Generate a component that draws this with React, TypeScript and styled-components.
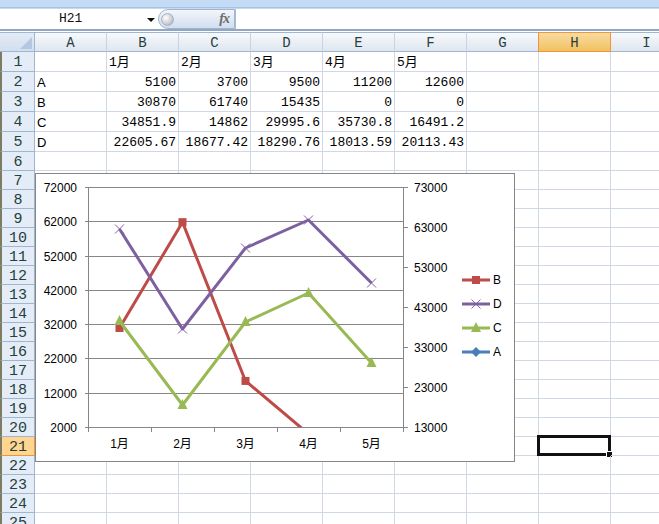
import React from "react";
import styled, { createGlobalStyle, css } from "styled-components";

const GlobalStyle = createGlobalStyle`
  html, body {
    margin: 0;
    padding: 0;
    background: #fff;
  }
  body {
    width: 659px;
    height: 524px;
    overflow: hidden;
    font-family: "Liberation Sans", Arial, sans-serif;
  }
`;

const Window = styled.div`
  width: 659px;
  height: 524px;
  overflow: hidden;
  background: #fff;
`;

const TitleStrip = styled.div`
  height: 7px;
  background: #c4dbf6;
  border-bottom: 1px solid #a9c2e3;
`;

const FormulaBar = styled.div`
  display: flex;
  height: 20px;
  border-top: 1px solid #c9d8ec;
  border-bottom: 2px solid #8da7c5;
  background: #fff;
  margin-bottom: 1px;
`;

const NameBox = styled.div`
  position: relative;
  width: 158px;
  flex-shrink: 0;
  font: 13px/20px "Liberation Mono", monospace;
  color: #111;
  padding-left: 59px;
  box-sizing: border-box;

  &::after {
    content: "";
    position: absolute;
    left: 147px;
    top: 9px;
    border-left: 4px solid transparent;
    border-right: 4px solid transparent;
    border-top: 4px solid #111;
  }
`;

const FxButton = styled.div`
  display: flex;
  align-items: center;
  justify-content: space-between;
  width: 77px;
  height: 20px;
  box-sizing: border-box;
  flex-shrink: 0;
  padding: 0 5px 0 2px;
  border: 1px solid #9fb5d0;
  border-radius: 10px 0 0 10px;
  background: linear-gradient(#f3f6fb, #d2deee);
`;

const Knob = styled.span`
  width: 13px;
  height: 13px;
  border-radius: 50%;
  background: radial-gradient(circle at 35% 35%, #ffffff, #c9ccd2 60%, #9ea4ad);
  border: 1px solid #a7b1bf;
  box-sizing: border-box;
`;

const FxLabel = styled.span`
  font: italic bold 14px "Liberation Serif", serif;
  color: #6b6b6b;
  letter-spacing: -1px;
`;

const FormulaInput = styled.div`
  flex: 1;
  border-left: 1px solid #a9bdd6;
`;

const Sheet = styled.div`
  position: relative;
`;

const Row = styled.div<{ $h: number }>`
  display: flex;
  height: ${(p) => p.$h}px;
`;

const HeaderRow = styled.div`
  display: flex;
  height: 20px;
`;

const Corner = styled.div`
  position: relative;
  width: 35px;
  flex-shrink: 0;
  box-sizing: border-box;
  border: 1px solid #9eb6ce;
  border-left: none;
  background: linear-gradient(#e3ebf6, #d3dfee);

  &::after {
    content: "";
    position: absolute;
    right: 2px;
    bottom: 2px;
    border-left: 12px solid transparent;
    border-bottom: 12px solid #b3c7e0;
  }
`;

const ColHeader = styled.div<{ $active?: boolean }>`
  width: 72px;
  flex-shrink: 0;
  box-sizing: border-box;
  text-align: center;
  font: 14px/18px "Liberation Mono", monospace;
  padding-top: 1px;
  color: #253f3c;
  border-top: 1px solid #9eb6ce;
  border-bottom: 1px solid #9eb6ce;
  border-right: 1px solid #c5d3e4;
  background: linear-gradient(#f7f9fc, #dfe6ef);
  ${(p) =>
    p.$active &&
    css`
      background: linear-gradient(#f9dba2, #f1c15f);
      border-color: #f29536;
      border-left: 1px solid #f29536;
      margin-left: -1px;
      width: 73px;
    `}
`;

const RowHeader = styled.div<{ $active?: boolean }>`
  width: 35px;
  flex-shrink: 0;
  box-sizing: border-box;
  text-align: center;
  font: 15px/18px "Liberation Mono", monospace;
  padding-top: 2px;
  color: #253f3c;
  background: #e4ecf7;
  border-left: 2px solid #7c7c62;
  border-right: 1px solid #9eb6ce;
  border-bottom: 1px solid #9eb6ce;
  ${(p) =>
    p.$active &&
    css`
      background: #ffd58f;
      border-right-color: #f29536;
      border-bottom-color: #f29536;
    `}
`;

const Cell = styled.div<{ $align: "left" | "right"; $sans?: boolean; $selected?: boolean }>`
  position: relative;
  width: 72px;
  flex-shrink: 0;
  box-sizing: border-box;
  padding: 2px 2px 0 2px;
  white-space: nowrap;
  overflow: hidden;
  text-align: ${(p) => p.$align};
  font-size: 13px;
  line-height: 18px;
  font-family: ${(p) =>
    p.$sans
      ? `"Liberation Sans", Arial, sans-serif`
      : `"Liberation Mono", "Noto Sans CJK SC", monospace`};
  color: #000;
  border-right: 1px solid #d0d7e5;
  border-bottom: 1px solid #d0d7e5;
  ${(p) =>
    p.$selected &&
    css`
      overflow: visible;
      &::before {
        content: "";
        position: absolute;
        top: -2px;
        left: -2px;
        right: -1px;
        bottom: -1px;
        border: 3px solid #111;
      }
      &::after {
        content: "";
        position: absolute;
        right: -3px;
        bottom: -3px;
        width: 7px;
        height: 7px;
        background: #111;
        border: 1px solid #fff;
        box-sizing: border-box;
      }
    `}
`;

const ChartBox = styled.div`
  position: absolute;
  left: 35px;
  top: 141px;
  width: 480px;
  height: 289px;
  box-sizing: border-box;
  border: 1px solid #868686;
  background: #fff;

  svg {
    display: block;
  }
  text {
    font-family: "Liberation Sans", "Noto Sans CJK SC", sans-serif;
    font-size: 12px;
    fill: #000;
  }
`;

const COLS = ["A", "B", "C", "D", "E", "F", "G", "H", "I"];

const DATA: string[][] = [
  ["", "1月", "2月", "3月", "4月", "5月"],
  ["A", "5100", "3700", "9500", "11200", "12600"],
  ["B", "30870", "61740", "15435", "0", "0"],
  ["C", "34851.9", "14862", "29995.6", "35730.8", "16491.2"],
  ["D", "22605.67", "18677.42", "18290.76", "18013.59", "20113.43"],
];

const rowHeight = (n: number) => (n <= 5 ? 20 : 19);

// plot area, in page coordinates
const X0 = 88;
const X1 = 403;
const Y0 = 187;
const Y1 = 427;
const cat = (i: number) => X0 + ((X1 - X0) * (i + 0.5)) / 5;
const leftY = (v: number) => Y1 - ((v - 2000) * (Y1 - Y0)) / 70000;
const rightY = (v: number) => Y1 - ((v - 13000) * (Y1 - Y0)) / 60000;
const crisp = (v: number) => Math.round(v) + 0.5;

type MarkerKind = "square" | "x" | "triangle" | "diamond";

interface Series {
  name: string;
  color: string;
  marker: MarkerKind;
  ys: number[];
}

const SERIES: Series[] = [
  { name: "B", color: "#be4b48", marker: "square", ys: [30870, 61740, 15435, 0, 0].map(leftY) },
  { name: "D", color: "#7d60a0", marker: "x", ys: [229, 329, 248, 220, 283] },
  { name: "C", color: "#98b954", marker: "triangle", ys: [321, 405, 322, 293, 363] },
  { name: "A", color: "#4a7ebb", marker: "diamond", ys: [5100, 3700, 9500, 11200, 12600].map(rightY) },
];

const Marker = ({ kind, x, y, color }: { kind: MarkerKind; x: number; y: number; color: string }) => {
  switch (kind) {
    case "square":
      return <rect x={x - 4} y={y - 4} width={8} height={8} fill={color} />;
    case "x":
      return (
        <path
          d={`M${x - 4.5} ${y - 4.5}L${x + 4.5} ${y + 4.5}M${x + 4.5} ${y - 4.5}L${x - 4.5} ${y + 4.5}`}
          stroke={color}
          strokeWidth={1}
          fill="none"
        />
      );
    case "triangle":
      return <path d={`M${x} ${y - 6}L${x + 5} ${y + 4}L${x - 5} ${y + 4}Z`} fill={color} />;
    default:
      return <path d={`M${x} ${y - 5}L${x + 5} ${y}L${x} ${y + 5}L${x - 5} ${y}Z`} fill={color} />;
  }
};

const LineChart = () => {
  const grid = Array.from({ length: 8 }, (_, i) => Y0 + (i * (Y1 - Y0)) / 7);
  const rightTicks = Array.from({ length: 7 }, (_, i) => Y0 + i * 40);
  const bounds = Array.from({ length: 6 }, (_, i) => X0 + ((X1 - X0) * i) / 5);

  return (
    <ChartBox>
      <svg width={478} height={287} viewBox="36 174 478 287">
        <defs>
          <clipPath id="plot">
            <rect x={X0} y={Y0 - 8} width={X1 - X0} height={Y1 - Y0 + 8} />
          </clipPath>
        </defs>

        <g stroke="#868686" strokeWidth={1} shapeRendering="crispEdges">
          {grid.map((y, i) => (
            <line key={i} x1={X0 - 3} x2={X1} y1={crisp(y)} y2={crisp(y)} />
          ))}
          <line x1={X0 + 0.5} x2={X0 + 0.5} y1={Y0} y2={Y1 + 1} />
          <line x1={X1 + 0.5} x2={X1 + 0.5} y1={Y0} y2={Y1 + 1} />
          {rightTicks.map((y, i) => (
            <line key={i} x1={X1} x2={X1 + 5} y1={crisp(y)} y2={crisp(y)} />
          ))}
          {bounds.map((x, i) => (
            <line key={i} x1={crisp(x)} x2={crisp(x)} y1={Y1} y2={Y1 + 5} />
          ))}
        </g>

        {grid.map((y, i) => (
          <text key={i} x={77} y={y + 5} textAnchor="end">
            {72000 - i * 10000}
          </text>
        ))}
        {rightTicks.map((y, i) => (
          <text key={i} x={414} y={y + 5}>
            {73000 - i * 10000}
          </text>
        ))}
        {[0, 1, 2, 3, 4].map((i) => (
          <text key={i} x={cat(i)} y={448} textAnchor="middle">
            {i + 1}月
          </text>
        ))}

        <g clipPath="url(#plot)">
          {SERIES.map((s) => (
            <g key={s.name}>
              <polyline
                points={s.ys.map((y, i) => `${cat(i)},${y}`).join(" ")}
                fill="none"
                stroke={s.color}
                strokeWidth={3}
                strokeLinejoin="round"
              />
              {s.ys.map((y, i) =>
                y <= Y1 && y >= Y0 ? (
                  <Marker key={i} kind={s.marker} x={cat(i)} y={y} color={s.color} />
                ) : null
              )}
            </g>
          ))}
        </g>

        {SERIES.map((s, i) => {
          const y = 280 + i * 24;
          return (
            <g key={s.name}>
              <line x1={462} x2={490} y1={y} y2={y} stroke={s.color} strokeWidth={3} />
              <Marker kind={s.marker} x={476} y={y} color={s.color} />
              <text x={493} y={y + 4}>
                {s.name}
              </text>
            </g>
          );
        })}
      </svg>
    </ChartBox>
  );
};

const App = () => {
  const rows = Array.from({ length: 25 }, (_, i) => i + 1);
  return (
    <Window>
      <GlobalStyle />
      <TitleStrip />
      <FormulaBar>
        <NameBox>H21</NameBox>
        <FxButton>
          <Knob />
          <FxLabel>fx</FxLabel>
        </FxButton>
        <FormulaInput />
      </FormulaBar>
      <Sheet>
        <HeaderRow>
          <Corner />
          {COLS.map((c) => (
            <ColHeader key={c} $active={c === "H"}>
              {c}
            </ColHeader>
          ))}
        </HeaderRow>
        {rows.map((r) => {
          const values = DATA[r - 1] || [];
          return (
            <Row key={r} $h={rowHeight(r)}>
              <RowHeader $active={r === 21}>{r}</RowHeader>
              {COLS.map((c, ci) => {
                const v = values[ci] || "";
                const numeric = /^[\d.]+$/.test(v);
                return (
                  <Cell
                    key={c}
                    $align={numeric ? "right" : "left"}
                    $sans={ci === 0}
                    $selected={r === 21 && c === "H"}
                  >
                    {v}
                  </Cell>
                );
              })}
            </Row>
          );
        })}
        <LineChart />
      </Sheet>
    </Window>
  );
};

export default App;
